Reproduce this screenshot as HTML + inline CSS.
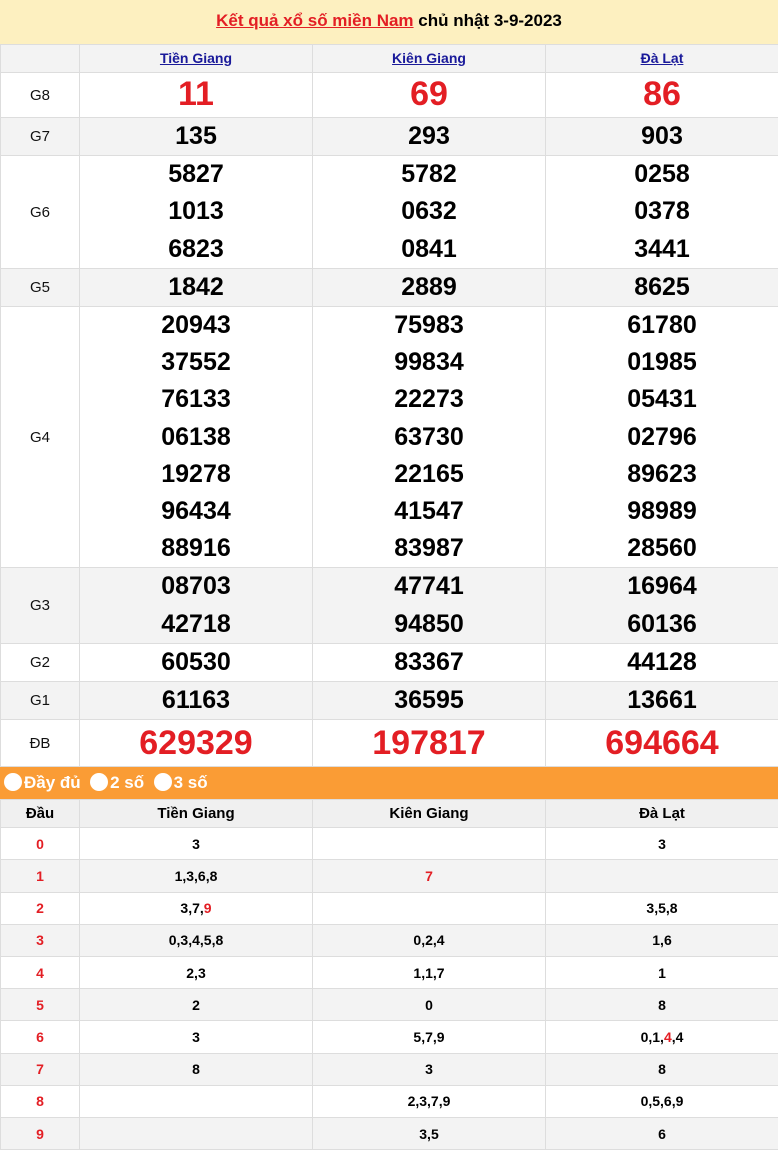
<!DOCTYPE html>
<html><head><meta charset="utf-8"><style>
*{margin:0;padding:0;box-sizing:border-box}
body{width:778px;height:1152px;background:#fff;font-family:"Liberation Sans",Arial,sans-serif;overflow:hidden}
.hd{height:44px;background:#fdf0c0;text-align:center;line-height:42px;font-size:17px;font-weight:bold;color:#000}
.hd a{color:#e31e24;text-decoration:underline}
table{border-collapse:collapse;table-layout:fixed;width:778px}
td{border:1px solid #ddd;text-align:center;padding:0;vertical-align:middle}
.t1 td.l{font-size:15px;color:#111}
.t1 td.n{font-size:25px;font-weight:bold;line-height:37.2px;color:#000}
.g{background:#f3f3f3}
.ch a{color:#1a1a9a;font-weight:bold;font-size:14px;text-decoration:underline}
.r{color:#e31e24!important}
.big{font-size:34px!important}
.bar{height:32px;background:#fa9c35;color:#fff;font-weight:bold;font-size:17px;line-height:32px;padding-left:4px}
.bar span{display:inline-block;width:18px;height:18px;border-radius:50%;background:#fff;vertical-align:-3px;margin-right:2px}
.t2 td{height:32.2px;font-size:14px;font-weight:bold;line-height:16px}
.t2 td.d{color:#e31e24;font-size:14px}
.t2 tr.h td{height:28px;background:#f0f0f0;font-size:15px}
</style></head><body>
<div class="hd"><a>Kết quả xổ số miền Nam</a> chủ nhật 3-9-2023</div>
<table class="t1">
<colgroup><col style="width:79px"><col style="width:233px"><col style="width:233px"><col style="width:233px"></colgroup>
<tr class="g ch" style="height:28px"><td></td><td><a>Tiền Giang</a></td><td><a>Kiên Giang</a></td><td><a>Đà Lạt</a></td></tr>
<tr style="height:45px"><td class="l">G8</td><td class="n r big">11</td><td class="n r big">69</td><td class="n r big">86</td></tr>
<tr class="g" style="height:38px"><td class="l">G7</td><td class="n">135</td><td class="n">293</td><td class="n">903</td></tr>
<tr style="height:112px"><td class="l">G6</td><td class="n">5827<br>1013<br>6823</td><td class="n">5782<br>0632<br>0841</td><td class="n">0258<br>0378<br>3441</td></tr>
<tr class="g" style="height:38px"><td class="l">G5</td><td class="n">1842</td><td class="n">2889</td><td class="n">8625</td></tr>
<tr style="height:261px"><td class="l">G4</td><td class="n">20943<br>37552<br>76133<br>06138<br>19278<br>96434<br>88916</td><td class="n">75983<br>99834<br>22273<br>63730<br>22165<br>41547<br>83987</td><td class="n">61780<br>01985<br>05431<br>02796<br>89623<br>98989<br>28560</td></tr>
<tr class="g" style="height:75px"><td class="l">G3</td><td class="n">08703<br>42718</td><td class="n">47741<br>94850</td><td class="n">16964<br>60136</td></tr>
<tr style="height:38px"><td class="l">G2</td><td class="n">60530</td><td class="n">83367</td><td class="n">44128</td></tr>
<tr class="g" style="height:38px"><td class="l">G1</td><td class="n">61163</td><td class="n">36595</td><td class="n">13661</td></tr>
<tr style="height:47px"><td class="l">ĐB</td><td class="n r big">629329</td><td class="n r big">197817</td><td class="n r big">694664</td></tr>
</table>
<div class="bar"><span></span>Đầy đủ &nbsp;<span></span>2 số &nbsp;<span></span>3 số</div>
<table class="t2">
<colgroup><col style="width:79px"><col style="width:233px"><col style="width:233px"><col style="width:233px"></colgroup>
<tr class="h"><td>Đầu</td><td>Tiền Giang</td><td>Kiên Giang</td><td>Đà Lạt</td></tr>
<tr><td class="d">0</td><td>3</td><td></td><td>3</td></tr>
<tr class="g"><td class="d">1</td><td>1,3,6,8</td><td class="r">7</td><td></td></tr>
<tr><td class="d">2</td><td>3,7,<span class="r">9</span></td><td></td><td>3,5,8</td></tr>
<tr class="g"><td class="d">3</td><td>0,3,4,5,8</td><td>0,2,4</td><td>1,6</td></tr>
<tr><td class="d">4</td><td>2,3</td><td>1,1,7</td><td>1</td></tr>
<tr class="g"><td class="d">5</td><td>2</td><td>0</td><td>8</td></tr>
<tr><td class="d">6</td><td>3</td><td>5,7,9</td><td>0,1,<span class="r">4</span>,4</td></tr>
<tr class="g"><td class="d">7</td><td>8</td><td>3</td><td>8</td></tr>
<tr><td class="d">8</td><td></td><td>2,3,7,9</td><td>0,5,6,9</td></tr>
<tr class="g"><td class="d">9</td><td></td><td>3,5</td><td>6</td></tr>
</table>
</body></html>
